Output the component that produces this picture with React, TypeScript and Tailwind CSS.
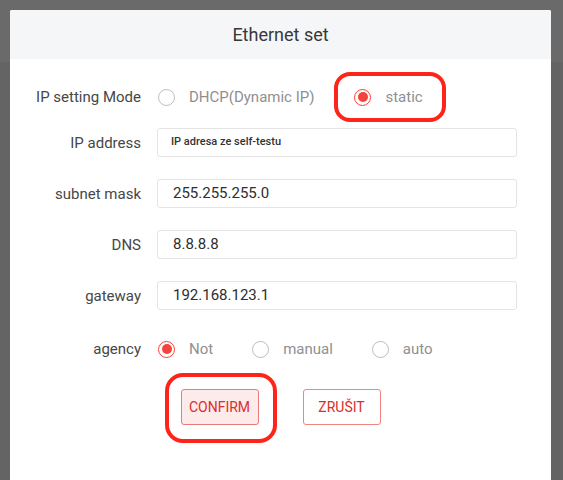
import React from "react";

type RadioProps = { checked?: boolean; label: string };

function Radio({ checked = false, label }: RadioProps) {
  return (
    <div className="flex items-center">
      {checked ? (
        <span className="flex h-[17px] w-[17px] items-center justify-center rounded-full border-[1.5px] border-[#f4423c] bg-white">
          <span className="h-[10px] w-[10px] rounded-full bg-[#f4423c]" />
        </span>
      ) : (
        <span className="h-[17px] w-[17px] rounded-full border border-[#bcbcbc] bg-white" />
      )}
      <span className="ml-[14px] text-[15px] leading-none text-[#909090]">{label}</span>
    </div>
  );
}

function Field({ label, value, small }: { label: string; value: string; small?: boolean }) {
  return (
    <div className="flex h-[29px] items-center">
      <div className="w-[131px] pt-[2px] text-right text-[15px] text-[#474747]">{label}</div>
      <div className="ml-[16px] flex h-[29px] w-[360px] items-center rounded-[3px] border border-[#e4e4e4] bg-white">
        {small ? (
          <span className="pl-[13px] text-[11px] font-medium text-[#333]">{value}</span>
        ) : (
          <span className="pl-[15px] text-[15px] text-[#2e2e2e]">{value}</span>
        )}
      </div>
    </div>
  );
}

export default function App() {
  return (
    <div className="relative h-[480px] w-[563px] overflow-hidden bg-[#646464] font-['Roboto',sans-serif]">
      <div className="h-[62px] w-full bg-[#6a6a6a]" />
      <div className="absolute left-[10px] top-[10px] h-[480px] w-[541px] overflow-hidden rounded-[2px] bg-white">
        {/* Header */}
        <div className="flex h-[49px] items-center justify-center bg-[#f5f6f8]">
          <span className="text-[18px] text-[#383838]">Ethernet set</span>
        </div>

        <div className="pt-[18px]">
          {/* IP setting mode */}
          <div className="flex h-[40px] items-center">
            <div className="w-[131px] text-right text-[15px] text-[#474747]">IP setting Mode</div>
            <div className="ml-[17px] flex items-center">
              <Radio label="DHCP(Dynamic IP)" />
              <div className="relative ml-[40px]">
                <Radio checked label="static" />
                <div className="pointer-events-none absolute -bottom-[16px] -left-[20px] -right-[23px] -top-[17px] rounded-[16px] border-[4px] border-[#ff2419]" />
              </div>
            </div>
          </div>

          <div className="mt-[11px] flex flex-col gap-[22px]">
            <Field label="IP address" value="IP adresa ze self-testu" small />
            <Field label="subnet mask" value="255.255.255.0" />
            <Field label="DNS" value="8.8.8.8" />
            <Field label="gateway" value="192.168.123.1" />
          </div>

          {/* agency */}
          <div className="mt-[19px] flex h-[40px] items-center">
            <div className="w-[131px] text-right text-[15px] text-[#474747]">agency</div>
            <div className="ml-[17px] flex items-center gap-[39px]">
              <Radio checked label="Not" />
              <Radio label="manual" />
              <Radio label="auto" />
            </div>
          </div>

          {/* buttons */}
          <div className="mt-[20px] flex justify-center gap-[44px]">
            <div className="relative">
              <button className="flex h-[36px] w-[78px] items-center justify-center rounded-[3px] border border-[#e77b77] bg-[#fdeaea] text-[14px] text-[#d8302a]">
                CONFIRM
              </button>
              <div className="pointer-events-none absolute -bottom-[18px] -left-[16px] -right-[18px] -top-[16px] rounded-[18px] border-[4px] border-[#ff2419]" />
            </div>
            <button className="flex h-[36px] w-[78px] items-center justify-center rounded-[3px] border border-[#f0847f] bg-white text-[14px] text-[#d8302a]">
              ZRUŠIT
            </button>
          </div>
        </div>
      </div>
    </div>
  );
}
